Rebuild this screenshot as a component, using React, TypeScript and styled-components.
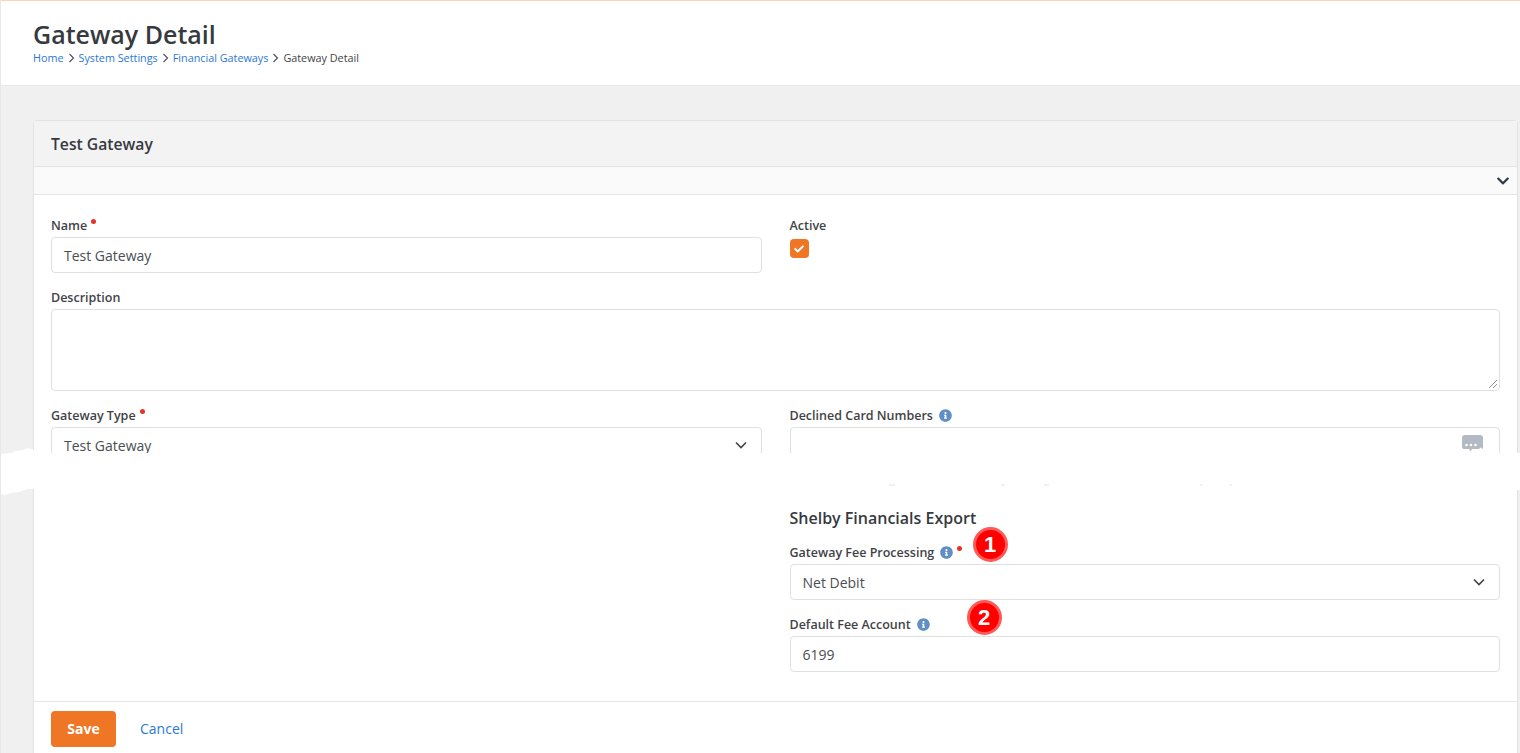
import React from "react";
import styled, { createGlobalStyle } from "styled-components";
import { FaCheck, FaChevronDown, FaInfoCircle } from "react-icons/fa";

const Global = createGlobalStyle`
  html, body { margin: 0; padding: 0; height: 753px; overflow: hidden; background: #f0f0f0; }
  body { font-family: "Open Sans", "Liberation Sans", sans-serif; color: #3a3d40; }
  * { box-sizing: border-box; }
`;

const Page = styled.div`
  position: relative;
  height: 753px;
  overflow: hidden;
  border-left: 1px solid #e8e8e8;
`;
const Header = styled.header`
  height: 86px;
  background: #fff;
  border-top: 1px solid #fbd5b8;
  border-bottom: 1px solid #e8e8e8;
  padding: 17px 0 0 32px;
`;
const Title = styled.h1`
  margin: 0;
  font-size: 25px;
  line-height: 32px;
  font-weight: 600;
  color: #363a3e;
`;
const Crumbs = styled.nav`
  display: flex;
  align-items: center;
  gap: 4px;
  font-size: 10.8px;
  line-height: 14px;
  margin-top: 1px;
`;
const Crumb = styled.a`
  color: #2b78d4;
`;
const CrumbCurrent = styled.span`
  color: #3f4347;
`;
const Panel = styled.section`
  margin: 34px 2px 0 32px;
  background: #fff;
  border: 1px solid #e2e2e2;
  border-radius: 4px 4px 0 0;
`;
const PanelHead = styled.div`
  height: 46px;
  padding-left: 17px;
  display: flex;
  align-items: center;
  background: #f3f3f3;
  border-bottom: 1px solid #e4e4e4;
  font-size: 15.7px;
  font-weight: 600;
  color: #363a3e;
`;
const SubBar = styled.div`
  height: 28px;
  background: #fafafa;
  border-bottom: 1px solid #e4e4e4;
  display: flex;
  align-items: center;
  justify-content: flex-end;
  padding: 1px 7px 0 0;
  color: #2d3a4a;
  font-size: 14px;
`;
const Body = styled.div`
  padding: 21px 17px 0;
`;
const Columns = styled.div`
  display: grid;
  grid-template-columns: 710.5px 710px;
  column-gap: 28px;
`;
const Field = styled.div`
  margin-bottom: 15px;
`;
const Label = styled.label`
  position: relative;
  display: flex;
  align-items: center;
  height: 18px;
  margin-bottom: 3px;
  font-size: 12.5px;
  font-weight: 600;
  color: #3f4347;
  line-height: 17px;
`;
const Required = styled.span`
  display: inline-block;
  width: 5px;
  height: 5px;
  border-radius: 50%;
  background: #e2352a;
  margin: -7px 0 0 4px;
`;
const Info = styled(FaInfoCircle)`
  color: #5f8fc4;
  font-size: 13px;
  margin-left: 6px;
`;
const Control = styled.div`
  position: relative;
  display: flex;
  align-items: center;
  justify-content: space-between;
  height: 36px;
  padding: 0 14px 0 12px;
  background: #fff;
  border: 1px solid #dfe0e1;
  border-radius: 4px;
  font-size: 14px;
  color: #4a4e52;
`;
const TextArea = styled(Control)`
  height: 82px;
`;
const Grip = styled.svg`
  position: absolute;
  right: 1px;
  bottom: 1px;
`;
const Check = styled.div`
  width: 19px;
  height: 19px;
  margin-top: 5px;
  background: #ee7625;
  border-radius: 4px;
  color: #fff;
  font-size: 10px;
  display: flex;
  align-items: center;
  justify-content: center;
`;
const Spacer = styled.div`
  height: 29px;
`;
const Heading = styled.h4`
  margin: 0 0 14px;
  font-size: 16px;
  line-height: 22px;
  font-weight: 600;
  color: #363a3e;
`;
const Badge = styled.span<{ $left: number; $top: number }>`
  position: absolute;
  left: ${(p) => p.$left}px;
  top: ${(p) => p.$top}px;
  width: 35px;
  height: 35px;
  border-radius: 50%;
  background: #f00;
  border: 3px solid #ff5a55;
  color: #fff;
  font: 700 22px/29px "Liberation Sans", Arial, sans-serif;
  text-align: center;
`;
const Footer = styled.div`
  display: flex;
  align-items: center;
  gap: 24px;
  height: 54px;
  margin-top: 14px;
  padding-left: 17px;
  border-top: 1px solid #e6e6e6;
`;
const Save = styled.button`
  width: 65px;
  height: 36px;
  border: 0;
  border-radius: 4px;
  background: #ee7625;
  color: #fff;
  font: 700 14px "Open Sans", sans-serif;
`;
const Cancel = styled.a`
  color: #2b78d4;
  font-size: 14px;
`;
const Tear = styled.svg`
  position: absolute;
  left: 0;
  top: 440px;
`;
const SmsGlyph = styled.svg`
  margin: -4px 2px 0 0;
`;

const Sep = () => (
  <svg width="7" height="10" viewBox="0 0 7 10" fill="none" stroke="#4b5560" strokeWidth="1.2">
    <path d="M1.5 1l4 4-4 4" />
  </svg>
);
const Caret = () => (
  <svg width="12" height="8" viewBox="0 0 12 8" fill="none" stroke="#3f4347" strokeWidth="1.6">
    <path d="M1 1.5l5 5 5-5" />
  </svg>
);
const SmsIcon = () => (
  <SmsGlyph width="21" height="17" viewBox="0 0 21 17">
    <path
      fill="#b4bac3"
      d="M3 0h15a3 3 0 0 1 3 3v11l-2.500-1.500-1.500 1.500H10l-1.500 2.500L7 14H2a2 2 0 0 1-2-2V3a3 3 0 0 1 3-3z"
    />
    <circle cx="4.500" cy="10" r="1.300" fill="#fff" />
    <circle cx="9" cy="10" r="1.300" fill="#fff" />
    <circle cx="13.500" cy="10" r="1.300" fill="#fff" />
  </SmsGlyph>
);

export default function App() {
  return (
    <Page>
      <Global />
      <Header>
        <Title>Gateway Detail</Title>
        <Crumbs>
          <Crumb>Home</Crumb>
          <Sep />
          <Crumb>System Settings</Crumb>
          <Sep />
          <Crumb>Financial Gateways</Crumb>
          <Sep />
          <CrumbCurrent>Gateway Detail</CrumbCurrent>
        </Crumbs>
      </Header>
      <Panel>
        <PanelHead>Test Gateway</PanelHead>
        <SubBar>
          <FaChevronDown />
        </SubBar>
        <Body>
          <Columns>
            <Field>
              <Label>
                Name<Required />
              </Label>
              <Control>Test Gateway</Control>
            </Field>
            <Field>
              <Label>Active</Label>
              <Check>
                <FaCheck />
              </Check>
            </Field>
          </Columns>
          <Field>
            <Label>Description</Label>
            <TextArea>
              <Grip width="10" height="10" viewBox="0 0 10 10" stroke="#777" strokeWidth="0.8">
                <path d="M1 9l8-8M5 9l4-4" />
              </Grip>
            </TextArea>
          </Field>
          <Columns>
            <Field>
              <Label>
                Gateway Type<Required />
              </Label>
              <Control>
                Test Gateway
                <Caret />
              </Control>
            </Field>
            <Field>
              <Label>
                Declined Card Numbers
                <Info />
              </Label>
              <Control>
                <span />
                <SmsIcon />
              </Control>
            </Field>
          </Columns>
          <Spacer />
          <Columns>
            <div />
            <div>
              <Heading>Shelby Financials Export</Heading>
              <Field>
                <Label>
                  Gateway Fee Processing
                  <Info />
                  <Required />
                  <Badge $left={183} $top={-16}>1</Badge>
                </Label>
                <Control>
                  Net Debit
                  <Caret />
                </Control>
              </Field>
              <Field>
                <Label>
                  Default Fee Account
                  <Info />
                  <Badge $left={177} $top={-15}>2</Badge>
                </Label>
                <Control>6199</Control>
              </Field>
            </div>
          </Columns>
        </Body>
        <Footer>
          <Save>Save</Save>
          <Cancel>Cancel</Cancel>
        </Footer>
      </Panel>
      <Tear width="1520" height="60" viewBox="0 0 1520 60">
        <path
          fill="#fff"
          d="M0 14 L10 13 L14 11 L22 10 L27 8 L33 10 L33 13 L1520 13 L1520 50 L33 50 L33 49 L26 49 L18 52 L10 53 L4 55 L0 54 Z"
        />
        <path
          stroke="#e4e4e4"
          strokeWidth="1"
          d="M888 45h6M1000 45h4M1043 45h5M1199 45h3M1228 45h3"
        />
      </Tear>
    </Page>
  );
}
